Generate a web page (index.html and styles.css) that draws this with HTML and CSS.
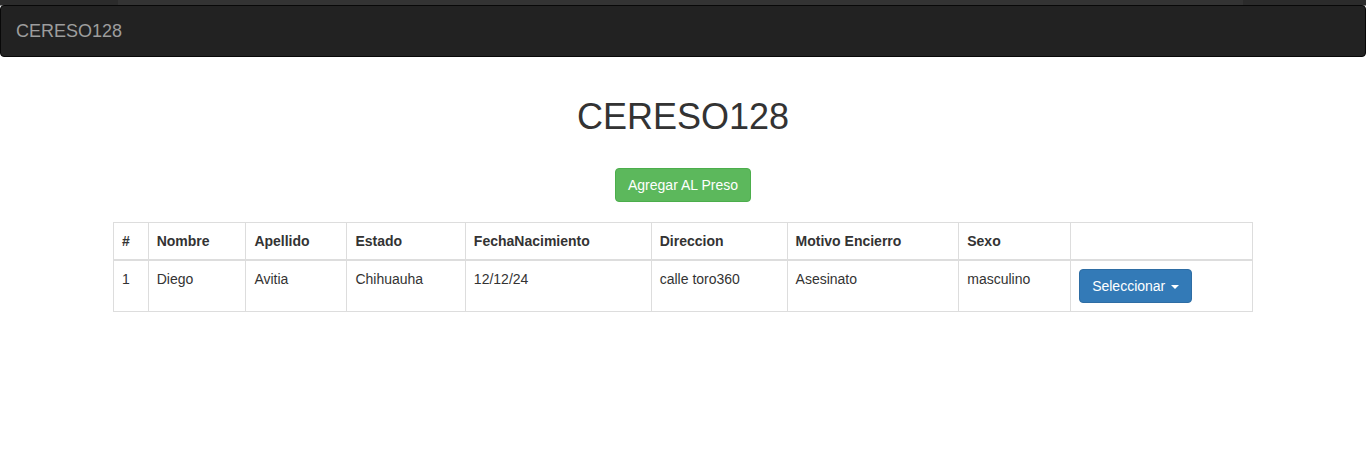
FILE: index.html
```html
<!DOCTYPE html>
<html lang="es">
<head>
<meta charset="utf-8">
<title>CERESO128</title>
<link rel="stylesheet" href="styles.css">
</head>
<body>
<div class="topstrip"><div class="topstrip-inner"></div></div>
<nav class="navbar">
  <a class="navbar-brand" href="#">CERESO128</a>
</nav>
<div class="container">
  <h1 class="title">CERESO128</h1>
  <div class="actions">
    <button class="btn btn-success" type="button">Agregar AL Preso</button>
  </div>
  <table class="table">
    <thead>
      <tr>
        <th>#</th>
        <th>Nombre</th>
        <th>Apellido</th>
        <th>Estado</th>
        <th>FechaNacimiento</th>
        <th>Direccion</th>
        <th>Motivo Encierro</th>
        <th>Sexo</th>
        <th></th>
      </tr>
    </thead>
    <tbody>
      <tr>
        <td>1</td>
        <td>Diego</td>
        <td>Avitia</td>
        <td>Chihuauha</td>
        <td>12/12/24</td>
        <td>calle toro360</td>
        <td>Asesinato</td>
        <td>masculino</td>
        <td class="cell-action"><button class="btn btn-primary" type="button">Seleccionar <span class="caret"></span></button></td>
      </tr>
    </tbody>
  </table>
</div>
</body>
</html>
```
FILE: styles.css
```css
* { box-sizing: border-box; }
html, body { margin: 0; padding: 0; }
body {
  font-family: "Liberation Sans", Arial, Helvetica, sans-serif;
  font-size: 14px;
  line-height: 1.42857143;
  color: #333;
  background: #fff;
}
.topstrip {
  background: #2b2b2b;
  display: flex;
  justify-content: center;
  border-bottom: 1px solid #8a8a8a;
  height: 6px;
}
.topstrip-inner {
  width: 1125px;
  margin-left: -5px;
  background: #333;
}
.navbar {
  height: 52px;
  background: #222;
  border: 1px solid #080808;
  border-radius: 4px;
  margin-top: -1px;
  margin-bottom: 20px;
  display: flex;
  align-items: stretch;
}
.navbar-brand {
  display: block;
  padding: 15px;
  font-size: 18px;
  line-height: 20px;
  color: #9d9d9d;
  text-decoration: none;
}
.container {
  display: flow-root;
  width: 1170px;
  margin: 0 auto;
  padding: 0 15px;
}
.title {
  margin: 20px 0 10px;
  font-size: 36px;
  font-weight: 500;
  line-height: 1.1;
  text-align: center;
  color: #333;
}
.actions {
  display: flex;
  justify-content: center;
  padding-top: 21px;
  margin-bottom: 20px;
}
.btn {
  display: inline-block;
  padding: 6px 12px;
  font-family: inherit;
  font-size: 14px;
  line-height: 1.42857143;
  border: 1px solid transparent;
  border-radius: 4px;
  color: #fff;
  cursor: pointer;
}
.btn-success { background: #5cb85c; border-color: #4cae4c; }
.btn-primary { background: #337ab7; border-color: #2e6da4; }
.caret {
  display: inline-block;
  width: 0;
  height: 0;
  margin-left: 2px;
  vertical-align: middle;
  border-top: 4px solid #fff;
  border-left: 4px solid transparent;
  border-right: 4px solid transparent;
}
.table {
  width: 100%;
  border-collapse: collapse;
  border: 1px solid #ddd;
  margin-bottom: 20px;
}
.table th, .table td {
  padding: 8px;
  border: 1px solid #ddd;
  text-align: left;
  vertical-align: top;
  line-height: 1.42857143;
}
.table thead th {
  vertical-align: bottom;
  border-bottom: 2px solid #ddd;
  font-weight: bold;
}
```
